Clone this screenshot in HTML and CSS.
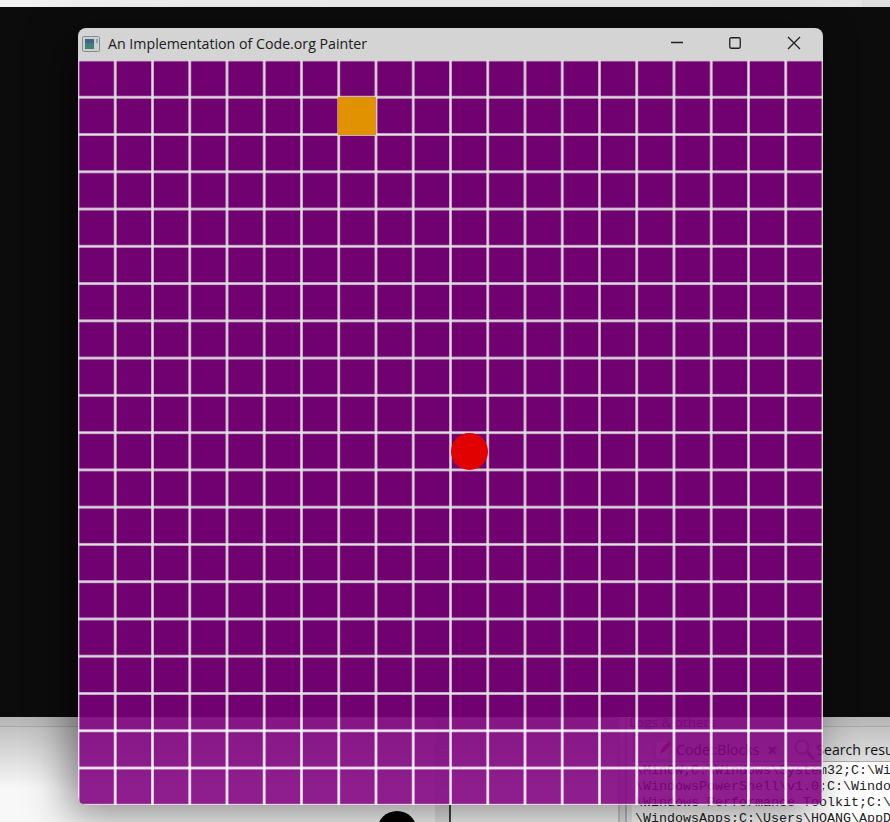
FILE: index.html
```html
<!DOCTYPE html>
<html>
  <head>
    <meta charset="utf-8" />
    <title>An Implementation of Code.org Painter</title>
    <link rel="stylesheet" href="styles.css">
  </head>

  <body>
    <!-- Desktop behind the window -->
    <div class="top-strip"></div>
    <div class="console"></div>
    <div class="ide">
      <div class="ide-left">
        <div class="avatar"></div>
      </div>
      <div class="ide-split"></div>
      <div class="ide-gutter"></div>
      <div class="ide-logs">
        <div class="logs-title">Logs &amp; others</div>
        <div class="logs-tabs">
          <svg class="tab-icon tab-pencil" width="20" height="22" viewBox="0 0 20 22">
            <path d="M1.5 2.5h13v18h-13z" fill="#f2f2f2" stroke="#c4c4c4" />
            <path d="M6 15l1.5-5 7-8 3 2.500-7 8z" fill="#d04848" />
          </svg>
          <span class="tab-name">Code::Blocks</span>
          <span class="tab-close">✖</span>
          <svg class="tab-icon" width="21" height="21" viewBox="0 0 21 21">
            <circle cx="8" cy="8" r="6.500" fill="#dfe8f2" stroke="#8a8a8a" stroke-width="2" />
            <path d="M13 13l7 7" stroke="#b06a30" stroke-width="3" />
          </svg>
          <span class="tab-name">Search results</span>
        </div>
        <div class="logs-text">
          <div>\MinGW;C:\Windows\System32;C:\Wi</div>
          <div>\WindowsPowerShell\v1.0;C:\Windo</div>
          <div>\Windows Performance Toolkit;C:\</div>
          <div>\WindowsApps;C:\Users\HOANG\AppD</div>
        </div>
      </div>
    </div>

    <!-- Painter window -->
    <div class="painter">
      <div class="titlebar">
        <svg class="app-icon" width="18" height="16" viewBox="0 0 18 16">
          <rect x="0.5" y="0.5" width="17" height="15" rx="1" fill="#e8eaea" stroke="#9a9e9e" />
          <rect x="3" y="3" width="9" height="10" fill="#4a8f88" />
          <rect x="3" y="3" width="9" height="4" fill="#44709a" />
          <rect x="14" y="3" width="2" height="4" fill="#9db8c0" />
        </svg>
        <span class="title">An Implementation of Code.org Painter</span>
        <div class="win-buttons">
          <svg width="12" height="12" viewBox="0 0 12 12"><path d="M0 5.500h12" /></svg>
          <svg width="12" height="12" viewBox="0 0 12 12"><rect x="0.750" y="0.750" width="10.500" height="10.500" rx="1.500" /></svg>
          <svg width="14" height="14" viewBox="0 0 14 14"><path d="M1 1l12 12M13 1L1 13" /></svg>
        </div>
      </div>
      <div class="board">
        <div class="cell-orange"></div>
        <div class="ball"></div>
      </div>
    </div>
  </body>
</html>
```

FILE: styles.css
```css
html,
body {
  height: 100%;
}
body {
  margin: 0;
  display: flex;
  flex-direction: column;
  position: relative;
  overflow: hidden;
  background: #0c0c0c;
  font-family: "Segoe UI", "Open Sans", "Noto Sans", sans-serif;
}

/* desktop behind the window */
.top-strip {
  height: 7px;
  background: linear-gradient(to right, #f2f2f2, #e5e5e5 862px, #dedede 862px);
}
.console {
  flex: 1;
  background: #0c0c0c;
}
.ide {
  height: 105px;
  flex: none;
  display: flex;
  background: linear-gradient(
    to bottom,
    #b6b6b6,
    #bcbcbc 9px,
    #a6a6a6 9px,
    #a6a6a6 10px,
    #c2c2c2 10px,
    #f8f8f8 72px
  );
}
.ide-left {
  width: 435px;
  flex: none;
  display: flex;
  justify-content: flex-end;
  padding-right: 18px;
  box-sizing: border-box;
  overflow: hidden;
}
.avatar {
  width: 40px;
  height: 40px;
  margin-top: 94px;
  flex: none;
  border-radius: 50%;
  background: #000;
}
.ide-split {
  width: 17px;
  flex: none;
  background: linear-gradient(
    to right,
    rgba(0, 0, 0, 0.08) 14px,
    #333 14px,
    #555 16px,
    transparent 16px
  );
}
.ide-gutter {
  width: 14px;
  flex: none;
  margin-left: 166px;
  background: linear-gradient(
    to right,
    #c8c8c8 2px,
    #e4e4e4 2px,
    #e4e4e4 7px,
    #bcbcbc 7px,
    #bcbcbc 9px,
    #ececec 9px
  );
}
.ide-logs {
  flex: 1;
  min-width: 0;
  white-space: nowrap;
}
.logs-title {
  font-size: 13.500px;
  line-height: 10px;
  margin-left: -3px;
  color: #444;
}
.logs-tabs {
  display: flex;
  align-items: center;
  margin-top: 10px;
  height: 25px;
  margin-left: 22px;
  overflow: hidden;
}
.tab-icon {
  flex: none;
  margin-right: 1px;
}
.tab-pencil {
  margin-right: 2px;
}
.tab-name {
  font-size: 14.100px;
  color: #111;
}
.tab-close {
  font-size: 13px;
  color: #555;
  margin: 0 16px 0 8px;
}
.logs-text {
  font-family: "Liberation Mono", monospace;
  font-size: 13.330px;
  line-height: 16px;
  color: #222;
  padding: 1px 0 0 3px;
  background: #fff;
  box-shadow: 0 -1px #aaa;
}

/* painter window */
.painter {
  position: absolute;
  left: 78px;
  top: 28px;
  width: 745px;
  height: 777px;
  display: flex;
  flex-direction: column;
  border-radius: 8px;
  overflow: hidden;
  opacity: 0.88;
  box-shadow: -10px 10px 40px rgba(0, 0, 0, 0.5);
}
.titlebar {
  height: 32px;
  flex: none;
  display: flex;
  align-items: center;
  padding-left: 4px;
  background: #f0f0f0;
  color: #222;
}
.app-icon {
  margin-right: 8px;
}
.title {
  font-size: 14.200px;
  margin-bottom: 1px;
}
.win-buttons {
  margin-left: auto;
  display: flex;
  align-items: center;
  gap: 46px;
  padding-right: 22px;
  margin-bottom: 2px;
}
.win-buttons svg {
  fill: none;
  stroke: #222;
  stroke-width: 1.300;
}

/* 20 x 20 painter grid */
.board {
  flex: 1;
  display: grid;
  grid-template-columns: repeat(20, 37.250px);
  grid-template-rows: repeat(20, 37.280px);
  background-color: #800080;
  background-image:
    linear-gradient(
      to right,
      rgba(255, 255, 255, 0.5) 0,
      #fff 1px,
      #fff 2px,
      rgba(255, 255, 255, 0.5) 3px,
      transparent 3px
    ),
    linear-gradient(
      to bottom,
      rgba(255, 255, 255, 0.5) 0,
      #fff 1px,
      #fff 2px,
      rgba(255, 255, 255, 0.5) 3px,
      transparent 3px
    );
  background-size: 37.250px 100%, 100% 37.280px;
  background-position: -1.500px 0, 0 -1.500px;
}
.cell-orange {
  grid-column: 8;
  grid-row: 2;
  background: #ffa500;
  margin: -0.500px 0 0 -0.500px;
}
.ball {
  grid-column: 11;
  grid-row: 11;
  border-radius: 50%;
  background: #ff0000;
}
```
